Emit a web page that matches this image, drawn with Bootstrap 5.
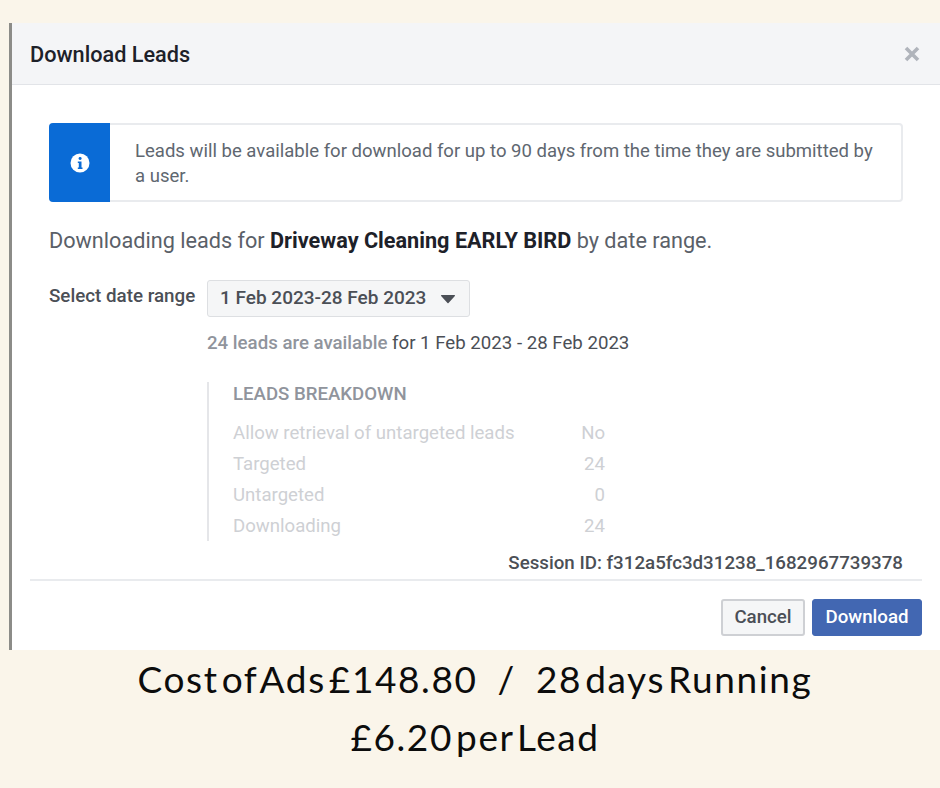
<!DOCTYPE html>
<html lang="en">
<head>
<meta charset="utf-8">
<title>Download Leads</title>
<link href="https://cdn.jsdelivr.net/npm/bootstrap@5.3.0/dist/css/bootstrap.min.css" rel="stylesheet">
<style>
html, body { margin: 0; background: #faf5ea; }
body { width: 940px; height: 788px; padding-top: 23px; font-family: Roboto, "Liberation Sans", sans-serif; overflow: hidden; }
.dlg { height: 627px; margin-left: 9px; background: #fff; border-left: 3px solid #8c8c88; }
.dlg-head { height: 62px; background: #f4f5f7; border-bottom: 1px solid #e2e4e8; padding: 3px 20px 0 18px; }
.dlg-title { font-size: 21.7px; font-weight: 500; color: #1d2129; margin: 0; }
.dlg-close { color: #b0b4bb; margin-top: -3px; }
.dlg-body { padding: 38px 37px 0; height: 494px; }
.note { height: 79px; width: 854px; border: 2px solid #e9ebee; border-radius: 4px; background: #fff; }
.note-mark { width: 61px; margin: -2px 0 -2px -2px; background: #0a6bd6; border-radius: 4px 0 0 4px; }
.note-copy { padding: 2px 24px 0 25px; font-size: 18.55px; line-height: 25px; color: #606770; }
.lead-line { font-size: 21.66px; color: #5a6068; margin: 26px 0 0; line-height: 26px; }
.lead-line b { font-weight: 700; color: #1d2129; }
.range-row { margin-top: 26px; }
.range-label { width: 158px; font-size: 18.8px; font-weight: 500; color: #4b4f56; padding-top: 5px; line-height: 22px; }
.range-btn { height: 37px; width: 263px; background: #f5f6f7; border: 1px solid #dddfe2; border-radius: 3px; font-size: 19px; font-weight: 500; color: #4b4f56; padding: 0 13px 0 12px; }
.avail { font-size: 18.66px; line-height: 24px; color: #4b4f56; margin: 14px 0 0; white-space: nowrap; }
.avail b { font-weight: 500; color: #90949c; }
.split { margin-top: 27px; height: 159px; width: 398px; border-left: 2px solid #e5e6e9; padding-left: 24px; }
.split-head { font-size: 18.64px; font-weight: 500; color: #90949c; line-height: 24px; margin: 1px 0 12px; }
.split-line { height: 31px; font-size: 18.6px; line-height: 31px; color: #ced0d4; }
.session { font-size: 18.73px; font-weight: 500; color: #4b4f56; text-align: right; width: 854px; margin-top: 10px; line-height: 24px; }
.dlg-foot { margin: 0 18px; width: 892px; border-top: 2px solid #e9ebee; padding-top: 18px; }
.act { height: 37px; font-size: 18.7px; font-weight: 500; border-radius: 3px; padding: 0; }
.act-cancel { width: 84px; background: #f5f6f7; border: 2px solid #ced0d4; color: #4b4f56; }
.act-go { width: 110px; background: #4267b2; border: 1px solid #4267b2; color: #fff; }
.acts { gap: 7px; }
.cost { text-align: center; padding-left: 10px; color: #0c0c0c; font-family: "Lato", sans-serif; font-weight: 400; font-size: 37px; line-height: 58px; letter-spacing: 1.6px; word-spacing: -8px; }
.cost p { margin: 0; }
.slash { margin: 0 17px; }
</style>
</head>
<body>
<div class="dlg">
  <div class="dlg-head d-flex align-items-center justify-content-between">
    <h1 class="dlg-title">Download Leads</h1>
    <svg class="dlg-close" width="16" height="16" viewBox="0 0 16 16" aria-label="Close"><path d="M2 2 14 14M14 2 2 14" stroke="currentColor" stroke-width="3.6" fill="none"/></svg>
  </div>
  <div class="dlg-body">
    <div class="note d-flex">
      <div class="note-mark d-flex align-items-center justify-content-center flex-shrink-0">
        <svg width="20" height="20" viewBox="0 0 20 20"><circle cx="10" cy="10" r="9.5" fill="#fff"/><rect x="8.6" y="4" width="3" height="3" rx="1.4" fill="#0a6bd6"/><path d="M7.8 8.5h3.7v6h1v1.4H7.8v-1.4h1v-4.6h-1z" fill="#0a6bd6"/></svg>
      </div>
      <div class="note-copy d-flex align-items-center">Leads will be available for download for up to 90 days from the time they are submitted by a user.</div>
    </div>
    <p class="lead-line">Downloading leads for <b>Driveway Cleaning EARLY BIRD</b> by date range.</p>
    <div class="range-row d-flex">
      <div class="range-label">Select date range</div>
      <div>
        <button class="range-btn d-flex align-items-center justify-content-between" type="button">1 Feb 2023-28 Feb 2023
          <svg width="16" height="10" viewBox="0 0 16 10"><path d="M1.5 1h13a.6.6 0 0 1 .4 1L8.5 9a.7.7 0 0 1-1 0L1.100 2a.6.6 0 0 1 .4-1z" fill="#4b4f56"/></svg>
        </button>
        <p class="avail"><b>24 leads are available</b> for 1 Feb 2023 - 28 Feb 2023</p>
        <div class="split">
          <div class="split-head">LEADS BREAKDOWN</div>
          <div class="split-line d-flex justify-content-between"><span>Allow retrieval of untargeted leads</span><span>No</span></div>
          <div class="split-line d-flex justify-content-between"><span>Targeted</span><span>24</span></div>
          <div class="split-line d-flex justify-content-between"><span>Untargeted</span><span>0</span></div>
          <div class="split-line d-flex justify-content-between"><span>Downloading</span><span>24</span></div>
        </div>
      </div>
    </div>
    <div class="session">Session ID: f312a5fc3d31238_1682967739378</div>
  </div>
  <div class="dlg-foot acts d-flex justify-content-end">
    <button class="btn act act-cancel" type="button">Cancel</button>
    <button class="btn act act-go" type="button">Download</button>
  </div>
</div>
<div class="cost">
  <p>Cost of Ads £148.80 <span class="slash">/</span> 28 days Running</p>
  <p>£6.20 per Lead</p>
</div>
<script src="https://cdn.jsdelivr.net/npm/bootstrap@5.3.0/dist/js/bootstrap.bundle.min.js"></script>
</body>
</html>
